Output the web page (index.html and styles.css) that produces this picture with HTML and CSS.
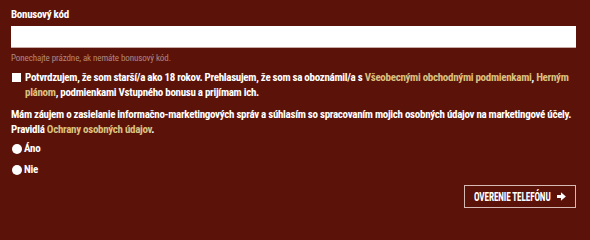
FILE: index.html
```html
<!DOCTYPE html>
<html lang="sk">
<head>
<meta charset="utf-8">
<link rel="stylesheet" href="styles.css">
</head>
<body>
<form class="form">
  <div class="field">
    <label class="field-label" for="bonus">Bonusový kód</label>
    <input class="text-input" id="bonus" type="text">
    <div class="hint">Ponechajte prázdne, ak nemáte bonusový kód.</div>
  </div>
  <label class="check-row">
    <span class="checkbox"></span>
    <span class="check-text">Potvrdzujem, že som starší/a ako 18 rokov. Prehlasujem, že som sa oboznámil/a s <a class="link" href="#">Všeobecnými obchodnými podmienkami</a>, <a class="link" href="#">Herným plánom</a>, podmienkami Vstupného bonusu a prijímam ich.</span>
  </label>
  <p class="consent">Mám záujem o zasielanie informačno-marketingových správ a súhlasím so spracovaním mojich osobných údajov na marketingové účely. Pravidlá <a class="link" href="#">Ochrany osobných údajov</a>.</p>
  <div class="radios">
    <label class="radio-row"><span class="radio"></span>Áno</label>
    <label class="radio-row"><span class="radio"></span>Nie</label>
  </div>
  <div class="actions">
    <button class="btn" type="button"><span class="btn-label"><span class="btn-text">OVERENIE TELEFÓNU</span></span>
      <svg class="arrow" width="9" height="9" viewBox="0 0 10 10"><path d="M0 3.4h4.4V0.3L9.9 5 4.4 9.7V6.6H0z" fill="#fff"/></svg>
    </button>
  </div>
</form>
</body>
</html>
```
FILE: styles.css
```css
html, body {
  margin: 0;
  padding: 0;
  background: #5b1309;
}
body {
  width: 590px;
  height: 217px;
  overflow: hidden;
  font-family: "Roboto Condensed", "Liberation Sans Narrow", "DejaVu Sans Condensed", sans-serif;
  color: #fff;
}
.form {
  padding: 8px 14px 0 11px;
  display: flex;
  flex-direction: column;
}
.field {
  display: flex;
  flex-direction: column;
}
.field-label {
  font-weight: bold;
  font-size: 11px;
  letter-spacing: -0.3px;
  line-height: 14px;
  margin-bottom: 4px;
}
.text-input {
  box-sizing: border-box;
  width: 565px;
  height: 22px;
  border: none;
  border-bottom: 1px solid #c9aaa6;
  background: #fff;
  margin: 0;
  padding: 0 6px;
}
.hint {
  margin-top: 4px;
  font-size: 9px;
  letter-spacing: -0.1px;
  line-height: 12px;
  color: #b3877f;
}
.check-row {
  margin-top: 6px;
  display: flex;
  align-items: flex-start;
  gap: 4px;
  font-weight: bold;
  font-size: 11px;
  letter-spacing: -0.3px;
  line-height: 15px;
}
.checkbox {
  flex: none;
  width: 9px;
  height: 9px;
  background: #fff;
  margin: 3px 0 0 1px;
}
.link {
  color: #dbc080;
  text-decoration: none;
}
.consent {
  margin: 7px 0 0;
  font-weight: bold;
  font-size: 11px;
  letter-spacing: -0.3px;
  line-height: 15px;
}
.radios {
  margin-top: 5px;
  display: flex;
  flex-direction: column;
  gap: 7px;
}
.radio-row {
  display: flex;
  align-items: center;
  gap: 2px;
  font-weight: bold;
  font-size: 11px;
  letter-spacing: -0.3px;
  line-height: 14px;
}
.radio {
  flex: none;
  width: 10px;
  height: 10px;
  margin-left: 1px;
  border-radius: 50%;
  background: #fff;
}
.actions {
  display: flex;
  justify-content: flex-end;
  margin-top: 8px;
}
.btn {
  box-sizing: border-box;
  display: flex;
  align-items: center;
  gap: 6px;
  width: 112px;
  height: 23px;
  padding: 0 10px 0 9px;
  background: transparent;
  border: 1px solid #d6b9b3;
  color: #fff;
  font-family: inherit;
  cursor: pointer;
}
.btn-label {
  flex: none;
  width: 77px;
  height: 14px;
  display: flex;
  align-items: center;
}
.btn-text {
  display: inline-block;
  font-weight: bold;
  font-size: 12.5px;
  line-height: 14px;
  letter-spacing: -0.2px;
  white-space: nowrap;
  transform: scaleX(0.74);
  transform-origin: left center;
}
.arrow {
  flex: none;
}
```
